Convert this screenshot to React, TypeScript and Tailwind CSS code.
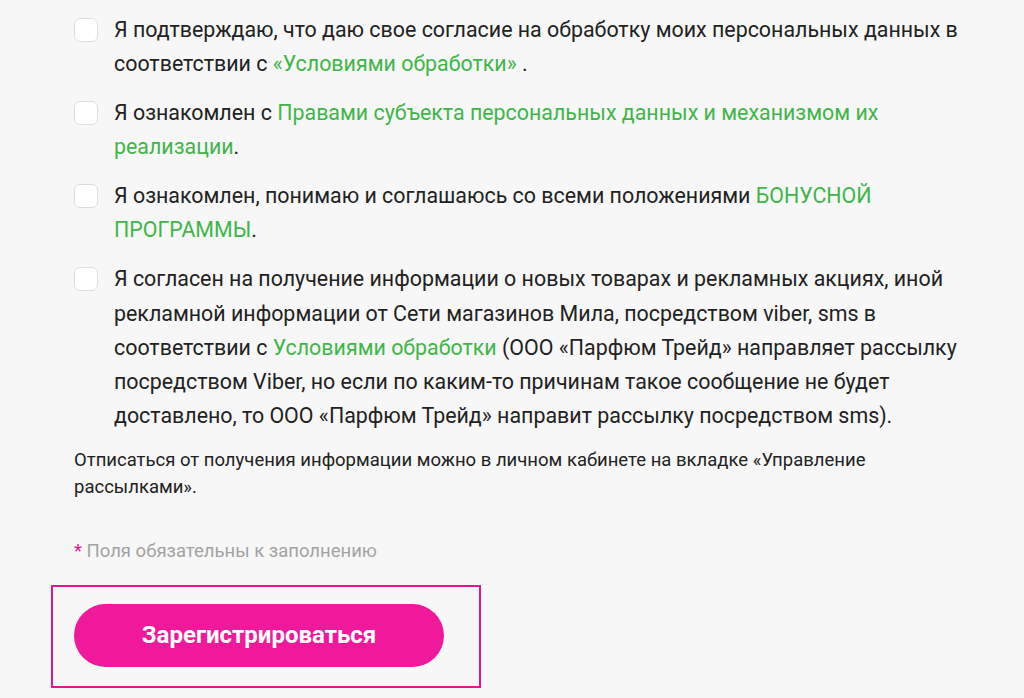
import React from 'react';

const Box: React.FC = () => (
  <span className="mt-[5px] h-6 w-6 shrink-0 rounded-[6px] border border-[#dedede] bg-white" />
);

const Row: React.FC<{ children: React.ReactNode }> = ({ children }) => (
  <div className="flex gap-4">
    <Box />
    <p className="text-[21.4px] leading-[34.3px] text-[#222]">{children}</p>
  </div>
);

const G: React.FC<{ children: React.ReactNode }> = ({ children }) => (
  <a className="text-[#3fb649]">{children}</a>
);

const App: React.FC = () => {
  return (
    <div className="min-h-[698px] bg-[#f7f7f7] font-['Roboto',sans-serif]">
      <div className="w-[985px] pl-[74px] pt-[13px]">
        <div className="flex flex-col gap-[14.5px]">
          <Row>
            Я подтверждаю, что даю свое согласие на обработку моих персональных данных в соответствии с{' '}
            <G>«Условиями обработки»</G> .
          </Row>
          <Row>
            Я ознакомлен с <G>Правами субъекта персональных данных и механизмом их реализации</G>.
          </Row>
          <Row>
            Я ознакомлен, понимаю и соглашаюсь со всеми положениями <G>БОНУСНОЙ ПРОГРАММЫ</G>.
          </Row>
          <Row>
            Я согласен на получение информации о новых товарах и рекламных акциях, иной рекламной
            информации от Сети магазинов Мила, посредством viber, sms в соответствии с{' '}
            <G>Условиями обработки</G> (ООО «Парфюм Трейд» направляет рассылку посредством Viber, но
            если по каким-то причинам такое сообщение не будет доставлено, то ООО «Парфюм Трейд»
            направит рассылку посредством sms).
          </Row>
        </div>
        <p className="mt-[13px] max-w-[860px] text-[18.5px] leading-[27px] text-[#222]">
          Отписаться от получения информации можно в личном кабинете на вкладке «Управление рассылками».
        </p>
        <p className="mt-[37px] text-[18.5px] leading-[27px] text-[#a3a3a3]">
          <span className="text-[#e5168f]">*</span> Поля обязательны к заполнению
        </p>
      </div>
      <div className="ml-[51px] mt-[20px] w-[430px] border-2 border-[#e3168d] px-[21px] pb-[19px] pt-[17px]">
        <button className="h-[63px] w-[370px] rounded-full bg-[#f0189b] text-[24px] font-bold text-white">
          Зарегистрироваться
        </button>
      </div>
    </div>
  );
};

export default App;
